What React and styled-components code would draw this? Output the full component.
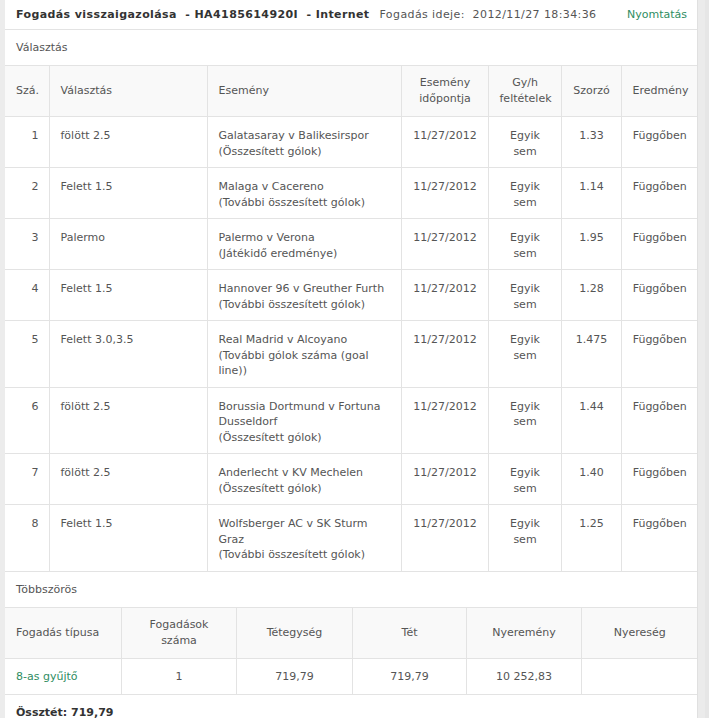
import React from "react";
import styled, { createGlobalStyle } from "styled-components";

const GlobalStyle = createGlobalStyle`
  html, body {
    margin: 0;
    padding: 0;
    background: #ececec;
  }
  body {
    font-family: "DejaVu Sans", Verdana, sans-serif;
    font-size: 11px;
    color: #555;
  }
`;

const Frame = styled.div`
  display: flex;
  padding-left: 5px;
  min-height: 718px;
  background: #ececec;
`;

const Slip = styled.div`
  width: 692px;
  background: #fff;
  box-sizing: border-box;
`;

const ScrollTrack = styled.div`
  flex: 1;
  background: #ebebeb;
  border-left: 1px solid #e0e0e0;
  border-right: 4px solid #e6e6e6;
`;

const TitleBar = styled.div`
  display: flex;
  align-items: center;
  height: 30px;
  padding: 0 10px 1px 11px;
  border-bottom: 1px solid #e3e3e3;
  box-sizing: border-box;
  white-space: pre;

  h1 {
    margin: 0;
    font-size: 11px;
    font-weight: bold;
    letter-spacing: 0.4px;
    color: #333;
  }

  .time {
    margin-left: 10px;
    letter-spacing: 0.4px;
    color: #555;
  }

  a {
    margin-left: auto;
    color: #2f8d62;
    text-decoration: none;
  }
`;

const Section = styled.div`
  padding: 10px 11px 9px;
  line-height: 16px;
  border-bottom: 1px solid #e3e3e3;
  font-weight: ${(p) => (p.$bold ? "bold" : "normal")};
  color: ${(p) => (p.$bold ? "#333" : "#555")};
`;

const Table = styled.table`
  width: 692px;
  table-layout: fixed;
  border-collapse: collapse;
  line-height: 15.5px;
`;

const Th = styled.th`
  font-weight: normal;
  background: #f9f9f9;
  height: 50px;
  padding: 0 10px 0 11px;
  line-height: 16px;
  vertical-align: middle;
  text-align: ${(p) => p.$align || "center"};
  border-right: 1px solid #e3e3e3;
  border-bottom: 1px solid #e3e3e3;
  color: #555;
  &:last-child {
    border-right: none;
  }
`;

const Td = styled.td`
  padding: ${(p) => (p.$flat ? "10px 10px 9px 11px" : "11px 10px 8px 11px")};
  line-height: ${(p) => (p.$flat ? "16px" : "15.5px")};
  vertical-align: top;
  text-align: ${(p) => p.$align || "center"};
  border-right: 1px solid #e3e3e3;
  border-bottom: 1px solid #e3e3e3;
  color: ${(p) => (p.$link ? "#2f8d62" : "#555")};
  &:last-child {
    border-right: none;
  }
`;

const selections = [
  ["fölött 2.5", "Galatasaray v Balikesirspor", "(Összesített gólok)", "1.33"],
  ["Felett 1.5", "Malaga v Cacereno", "(További összesített gólok)", "1.14"],
  ["Palermo", "Palermo v Verona", "(Játékidő eredménye)", "1.95"],
  ["Felett 1.5", "Hannover 96 v Greuther Furth", "(További összesített gólok)", "1.28"],
  ["Felett 3.0,3.5", "Real Madrid v Alcoyano", "(További gólok száma (goal line))", "1.475"],
  ["fölött 2.5", "Borussia Dortmund v Fortuna Dusseldorf", "(Összesített gólok)", "1.44"],
  ["fölött 2.5", "Anderlecht v KV Mechelen", "(Összesített gólok)", "1.40"],
  ["Felett 1.5", "Wolfsberger AC v SK Sturm Graz", "(További összesített gólok)", "1.25"],
];

const topCols = [44, 158, 194, 87, 73, 60, 76];
const bottomCols = [116, 115, 116, 114, 115, 116];

function App() {
  return (
    <>
      <GlobalStyle />
      <Frame>
        <Slip>
          <TitleBar>
            <h1>Fogadás visszaigazolása  - HA4185614920I  - Internet</h1>
            <span className="time">Fogadás ideje:  2012/11/27 18:34:36</span>
            <a href="#print">Nyomtatás</a>
          </TitleBar>

          <Section>Választás</Section>
          <Table>
            <colgroup>
              {topCols.map((w, i) => (
                <col key={i} style={{ width: w }} />
              ))}
            </colgroup>
            <thead>
              <tr>
                <Th $align="left">Szá.</Th>
                <Th $align="left">Választás</Th>
                <Th $align="left">Esemény</Th>
                <Th>
                  Esemény
                  <br />
                  időpontja
                </Th>
                <Th>
                  Gy/h
                  <br />
                  feltételek
                </Th>
                <Th>Szorzó</Th>
                <Th>Eredmény</Th>
              </tr>
            </thead>
            <tbody>
              {selections.map(([pick, event, market, odds], i) => (
                <tr key={i}>
                  <Td $align="right">{i + 1}</Td>
                  <Td $align="left">{pick}</Td>
                  <Td $align="left">
                    {event}
                    <br />
                    {market}
                  </Td>
                  <Td>11/27/2012</Td>
                  <Td>
                    Egyik
                    <br />
                    sem
                  </Td>
                  <Td>{odds}</Td>
                  <Td>Függőben</Td>
                </tr>
              ))}
            </tbody>
          </Table>

          <Section>Többszörös</Section>
          <Table>
            <colgroup>
              {bottomCols.map((w, i) => (
                <col key={i} style={{ width: w }} />
              ))}
            </colgroup>
            <thead>
              <tr>
                <Th $align="left">Fogadás típusa</Th>
                <Th>
                  Fogadások
                  <br />
                  száma
                </Th>
                <Th>Tétegység</Th>
                <Th>Tét</Th>
                <Th>Nyeremény</Th>
                <Th>Nyereség</Th>
              </tr>
            </thead>
            <tbody>
              <tr>
                <Td $flat $align="left" $link>
                  8-as gyűjtő
                </Td>
                <Td $flat>1</Td>
                <Td $flat>719,79</Td>
                <Td $flat>719,79</Td>
                <Td $flat>10 252,83</Td>
                <Td $flat></Td>
              </tr>
            </tbody>
          </Table>
          <Section $bold>Össztét: 719,79</Section>
        </Slip>
        <ScrollTrack />
      </Frame>
    </>
  );
}

export default App;
